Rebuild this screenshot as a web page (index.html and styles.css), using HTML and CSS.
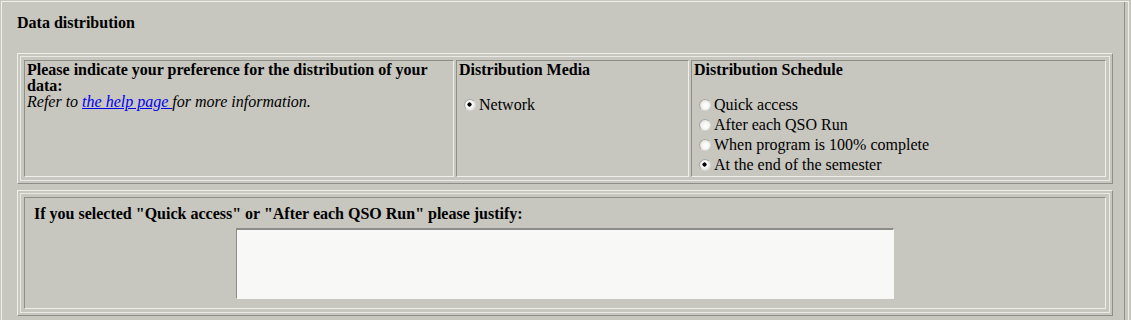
FILE: index.html
```html
<!DOCTYPE html>
<html lang="en">
<head>
    <meta charset="UTF-8">
    <meta name="viewport" content="width=device-width, initial-scale=1.0">
    <title>Data distribution</title>
    <link rel="stylesheet" href="styles.css">
</head>
<body>
    <div class="page">
        <div class="frame">
            <div class="heading">Data distribution</div>

            <div class="box">
                <div class="box-inner row">
                    <div class="cell cell-pref">
                        <b>Please indicate your preference for the distribution of your data:</b><br>
                        <i>Refer to <a href="#">the help page </a>for more information.</i>
                    </div>
                    <div class="cell cell-media">
                        <b>Distribution Media</b>
                        <div class="spacer"></div>
                        <label class="opt"><input type="radio" name="media" checked> Network</label>
                    </div>
                    <div class="cell cell-sched">
                        <b>Distribution Schedule</b>
                        <div class="spacer"></div>
                        <label class="opt"><input type="radio" name="sched"> Quick access</label>
                        <label class="opt"><input type="radio" name="sched"> After each QSO Run</label>
                        <label class="opt"><input type="radio" name="sched"> When program is 100% complete</label>
                        <label class="opt"><input type="radio" name="sched" checked> At the end of the semester</label>
                    </div>
                </div>
            </div>

            <div class="box box-justify">
                <div class="box-inner">
                    <div class="cell cell-justify">
                        <b>If you selected "Quick access" or "After each QSO Run" please justify:</b>
                        <textarea class="justify"></textarea>
                    </div>
                </div>
            </div>
        </div>
    </div>
</body>
</html>
```
FILE: styles.css
```css
body {
    font-family: "Liberation Serif", "Times New Roman", serif;
    font-size: 16px;
    line-height: 16px;
    color: #000;
    margin: 0;
    background-color: #c7c6bf;
}
.page {
    margin: 1px 2px 0 1px;
    border: 1px solid #efefeb;
    border-bottom: none;
    padding-right: 3px;
    height: 330px;
}
.frame {
    border-right: 1px solid #93938d;
    height: 100%;
    padding: 13px 11px 0 15px;
    box-sizing: border-box;
}
.heading {
    font-weight: bold;
    margin-bottom: 22px;
}

/* tables with 3d borders */
.box {
    border: 1px solid;
    border-color: #efefeb #8f8f8a #8f8f8a #efefeb;
    padding: 2px;
}
.box-inner {
    border: 1px solid #e9e9e5;
    padding: 3px;
}
.row {
    display: flex;
    gap: 2px;
}
.cell {
    border: 1px solid;
    border-color: #8f8f8a #efefeb #efefeb #8f8f8a;
    padding: 1px 2px 2px 2px;
}
.cell-pref {
    width: 430px;
    box-sizing: border-box;
}
.cell-media {
    width: 233px;
    box-sizing: border-box;
}
.cell-sched {
    flex: 1;
}
.spacer {
    height: 16px;
}
.opt {
    display: flex;
    align-items: center;
    height: 20px;
    padding-top: 2px;
    box-sizing: border-box;
}
.opt input {
    appearance: none;
    -webkit-appearance: none;
    width: 12px;
    height: 12px;
    margin: 0 3px 0 5px;
    border-radius: 50%;
    border: 1px solid #a9a9a4;
    border-right-color: #d8d8d4;
    border-bottom-color: #d8d8d4;
    background: radial-gradient(circle at 60% 60%, #ffffff 0, #f4f4f2 45%, #d2d2ce 100%);
}
.opt input:checked {
    background: radial-gradient(circle at 45% 45%, #000 0, #000 1.8px, #ffffff 2.4px, #f4f4f2 45%, #d2d2ce 100%);
}
a {
    color: #0000ee;
}

.box-justify {
    margin-top: 6px;
}
.cell-justify {
    padding: 8px 9px 9px 9px;
}
.justify {
    display: block;
    box-sizing: border-box;
    width: 658px;
    height: 71px;
    margin: 6px auto 0;
    border: 1px solid #f7f7f6;
    border-top: 2px solid #8c8c88;
    border-left-color: #8c8c88;
    background-color: #f8f8f7;
    resize: none;
    font-family: "Liberation Mono", monospace;
}
```
